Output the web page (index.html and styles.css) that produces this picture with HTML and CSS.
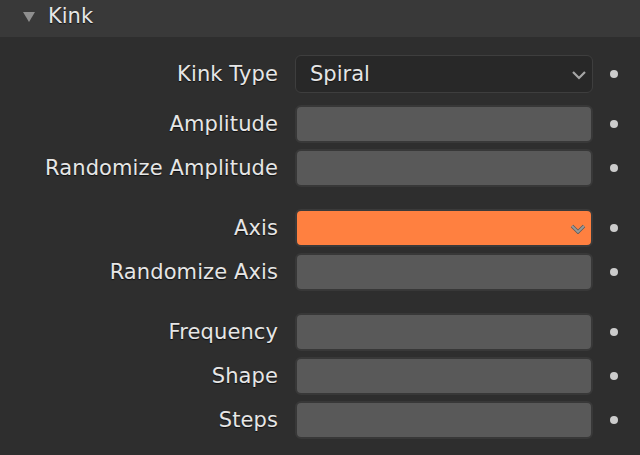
FILE: index.html
```html
<!DOCTYPE html>
<html lang="en">
<head>
    <meta charset="UTF-8">
    <meta name="viewport" content="width=device-width, initial-scale=1.0">
    <title>Kink</title>
    <link rel="stylesheet" href="styles.css">
</head>
<body>
    <div class="panel-header">
        <span class="arrow"></span>
        <span class="panel-title">Kink</span>
    </div>
    <div class="panel-body">
        <div class="group first">
            <div class="row">
                <span class="label">Kink Type</span>
                <div class="field dropdown">
                    <span class="value">Spiral</span>
                    <svg class="chevron" width="16" height="10" viewBox="0 0 16 10"><path d="M2 2 L8 8 L14 2" fill="none" stroke="#a6a6a6" stroke-width="2.2"/></svg>
                </div>
                <span class="dot"></span>
            </div>
        </div>
        <div class="group">
            <div class="row">
                <span class="label">Amplitude</span>
                <div class="field"></div>
                <span class="dot"></span>
            </div>
            <div class="row">
                <span class="label">Randomize Amplitude</span>
                <div class="field"></div>
                <span class="dot"></span>
            </div>
        </div>
        <div class="group spaced">
            <div class="row">
                <span class="label">Axis</span>
                <div class="field active">
                    <svg class="chevron" width="16" height="10" viewBox="0 0 16 10"><path d="M2 2 L8 8 L14 2" fill="none" stroke="#5c5c5c" stroke-width="3.4"/><path d="M2 2 L8 8 L14 2" fill="none" stroke="#9a9a9a" stroke-width="1.8"/></svg>
                </div>
                <span class="dot"></span>
            </div>
            <div class="row">
                <span class="label">Randomize Axis</span>
                <div class="field"></div>
                <span class="dot"></span>
            </div>
        </div>
        <div class="group spaced">
            <div class="row">
                <span class="label">Frequency</span>
                <div class="field"></div>
                <span class="dot"></span>
            </div>
            <div class="row">
                <span class="label">Shape</span>
                <div class="field"></div>
                <span class="dot"></span>
            </div>
            <div class="row">
                <span class="label">Steps</span>
                <div class="field"></div>
                <span class="dot"></span>
            </div>
        </div>
    </div>
</body>
</html>
```

FILE: styles.css
```css
body, html {
    margin: 0;
    padding: 0;
    width: 100%;
    height: 100%;
    overflow: hidden;
    background: #2e2e2e;
    font-family: "DejaVu Sans", sans-serif;
    color: #e6e6e6;
}
.panel-header {
    height: 37px;
    background: #393939;
    display: flex;
    align-items: center;
    box-sizing: border-box;
    padding-left: 23px;
}
.arrow {
    width: 0;
    height: 0;
    border-left: 6px solid transparent;
    border-right: 6px solid transparent;
    border-top: 10px solid #8f8f8f;
    margin-right: 13px;
    margin-top: -4px;
}
.panel-title {
    font-size: 21px;
    margin-top: -6px;
    text-shadow: 0 1px 1px rgba(0, 0, 0, 0.7);
}
.panel-body {
    padding-top: 18px;
}
.group {
    display: flex;
    flex-direction: column;
    gap: 6px;
    margin-top: 12px;
}
.group.first {
    margin-top: 0;
}
.group.spaced {
    margin-top: 22px;
}
.row {
    display: grid;
    grid-template-columns: 278px 298px 8px;
    column-gap: 17px;
    align-items: center;
    height: 38px;
}
.label {
    text-align: right;
    font-size: 21px;
    letter-spacing: 0.1px;
    text-shadow: 0 1px 1px rgba(0, 0, 0, 0.7);
    margin-top: -1px;
}
.field {
    height: 38px;
    box-sizing: border-box;
    background: #595959;
    border: 2px solid #383838;
    border-radius: 6px;
    position: relative;
    display: flex;
    align-items: center;
}
.field.dropdown {
    background: #282828;
    border: 1px solid #3e3e3e;
}
.field.active {
    background: #ff8040;
    border-color: #3a3a3a;
}
.value {
    font-size: 21px;
    padding-left: 14px;
    margin-top: -1px;
    text-shadow: 0 1px 1px rgba(0, 0, 0, 0.5);
}
.chevron {
    position: absolute;
    right: 5px;
    top: 14px;
}
.field.active .chevron {
    top: 13px;
}
.dot {
    width: 8px;
    height: 8px;
    border-radius: 50%;
    background: #cccccc;
}
```
